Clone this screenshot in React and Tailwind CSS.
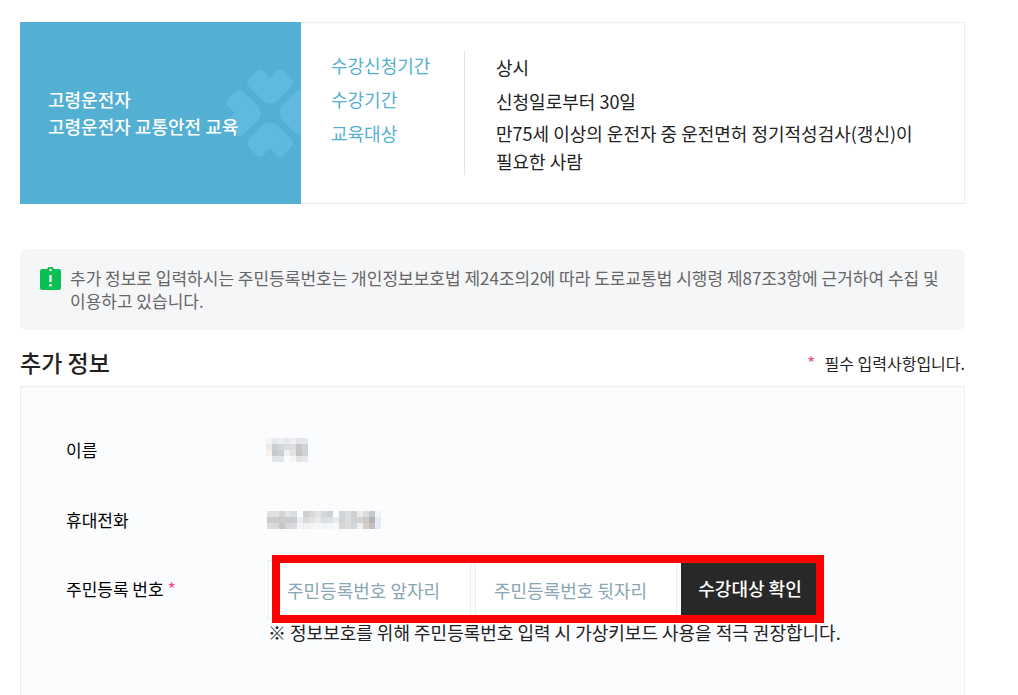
import React from 'react';

const courseInfo = [
  { label: '수강신청기간', value: '상시', line: 'leading-8' },
  { label: '수강기간', value: '신청일로부터 30일', line: 'leading-8' },
  {
    label: '교육대상',
    value: '만75세 이상의 운전자 중 운전면허 정기적성검사(갱신)이 필요한 사람',
    line: 'leading-7',
  },
];

// 개인정보 모자이크 (한 칸 6px)
const nameMosaic = [
  ['#f3f4f5', '#e6e8eb', '#edeef0', '#e6e8eb', '#eeeff1', '#e3e5e8', '#e5e8eb'],
  ['#ece9e8', '#cacdd2', '#d5d7d9', '#dbdcdd', '#dddddd', '#c5c7c9', '#cfd3d6'],
  ['#f5f1ec', '#c5c8cf', '#cccfd3', '#f0f1f3', '#e5e4e4', '#c2c4c6', '#cdd1d4'],
  [null, '#e2e5eb', '#e1e4ea', null, '#f6f4f2', '#e2e4e8', '#e6e8ec'],
];

const phoneMosaic = [
  ['#dfe1e3', '#dfe1e2', '#d3d5d7', '#e2e3e4', '#d8dcdf', null, '#cfcfd1', '#d7d8da', '#e2e3e5', '#d5d8db', '#cdced1', null, '#d4d4d5', '#dcdfe1', '#cfcfd0', '#e9ebed', '#d9dde0', '#c9c8c9', '#f0f4fa'],
  ['#cbccce', '#cacbcd', '#c9cacc', '#cacbcd', '#cbccce', '#ebecef', '#d9dadd', '#e4e1de', '#e9eaec', '#dcdfe1', '#dfe1e3', '#e9eaed', '#d3d2d2', '#d9dfe2', '#d1d2d3', '#d0d1d3', '#ccc9c9', '#b7b2b2', '#e4ebf5'],
  ['#dadbdd', '#d8d9db', '#c6c6c7', '#d5d6d8', '#d9dadc', '#f4f5f7', '#f0f1f3', '#f2f3f5', '#f5f6f8', '#f3f4f6', '#f4f5f7', '#f7f8fa', '#d9d7d5', '#dadcde', '#d4d5d7', '#efeff1', '#d5cfcc', '#c3bfc0', '#e4ebf5'],
];

const Mosaic = ({ cells, label }) => (
  <svg
    role="img"
    aria-label={label}
    width={cells[0].length * 6}
    height={cells.length * 6}
    shapeRendering="crispEdges"
  >
    {cells.map((row, y) =>
      row.map((color, x) =>
        color ? <rect key={`${x}-${y}`} x={x * 6} y={y * 6} width="6" height="6" fill={color} /> : null
      )
    )}
  </svg>
);

const petal =
  'M0 -35 L6 -41.5 Q10 -45 14 -42 L21 -34.500 Q24.500 -31 21.500 -27 L7 -12 Q0 -7 -7 -12 L-21.500 -27 Q-24.500 -31 -21 -34.500 L-14 -42 Q-10 -45 -6 -41.500 Z';

const Clover = () => (
  <svg className="absolute right-0 top-[46px]" width="75" height="90" viewBox="-44 -45 75 90" aria-hidden="true">
    <g fill="#60b9de">
      <path d={petal} />
      <path d={petal} transform="rotate(90)" />
      <path d={petal} transform="rotate(180)" />
      <path d={petal} transform="rotate(270)" />
    </g>
  </svg>
);

const NoticeIcon = () => (
  <svg className="mt-1.5 shrink-0" width="21" height="23" viewBox="0 0 21 23" aria-hidden="true">
    <path
      fill="#0abf53"
      fillRule="evenodd"
      d="M2 2 H7.300 A3.300 3.300 0 0 1 13.700 2 H19 Q21 2 21 4 V21 Q21 23 19 23 H2 Q0 23 0 21 V4 Q0 2 2 2 Z M10.500 1.800 A1.200 1.200 0 1 0 10.500 4.200 A1.200 1.200 0 1 0 10.500 1.800 Z M9.300 8 V15 H11.700 V8 Z M9.300 17 V19.400 H11.700 V17 Z"
    />
  </svg>
);

const CourseCard = () => (
  <section className="flex min-h-[182px]">
    <div className="relative flex w-[281px] shrink-0 items-center bg-[#54b0d3] pl-7">
      <Clover />
      <h2 className="relative text-lg font-medium leading-[27px] text-white">
        고령운전자
        <br />
        고령운전자 교통안전 교육
      </h2>
    </div>
    <dl className="grid flex-1 grid-cols-[133px_1fr] grid-rows-[34px_34px_auto] border border-l-0 border-[#e8eef2] py-7 pl-[30px] pr-8 text-lg">
      {courseInfo.map(item => (
        <React.Fragment key={item.label}>
          <dt className="leading-7 text-[#54b0d3]">{item.label}</dt>
          <dd className={`border-l border-[#dfe3e6] pl-[31px] text-[#222222] ${item.line}`}>{item.value}</dd>
        </React.Fragment>
      ))}
    </dl>
  </section>
);

const App = () => {
  return (
    <main className="flex min-h-screen flex-col break-keep bg-white pl-5 pr-[53px] pt-[22px] font-['Noto_Sans_CJK_KR','Noto_Sans',sans-serif]">
      <CourseCard />

      <div className="mt-[45px] flex gap-[9px] rounded-md bg-[#f5f6f8] pb-[18px] pl-5 pr-4 pt-3">
        <NoticeIcon />
        <p className="pt-[5px] text-[17px] leading-[23px] text-[#666666]">
          추가 정보로 입력하시는 주민등록번호는 개인정보보호법 제24조의2에 따라 도로교통법 시행령 제87조3항에 근거하여 수집 및 이용하고 있습니다.
        </p>
      </div>

      <div className="flex h-14 items-center justify-between pt-2">
        <h3 className="text-[23px] font-medium leading-8 text-[#222222]">추가 정보</h3>
        <p className="text-base leading-6 text-[#222222]">
          <span className="mr-[9px] text-lg leading-6 text-[#f54b8d]">*</span>
          필수 입력사항입니다.
        </p>
      </div>

      <form
        className="grow border border-b-0 border-[#e8eef2] bg-[#fbfcfe] pb-10 pl-[45px] pr-10 pt-7 text-[17px] text-black"
        onSubmit={e => e.preventDefault()}
      >
        <div className="flex h-[70px] items-center">
          <span className="w-[200px]">이름</span>
          <Mosaic cells={nameMosaic} label="이름" />
        </div>
        <div className="flex h-[70px] items-center">
          <span className="w-[201px]">휴대전화</span>
          <Mosaic cells={phoneMosaic} label="휴대전화" />
        </div>
        <div className="flex items-start pt-[5px]">
          <label htmlFor="rrn-front" className="w-[202px] shrink-0 leading-[57px]">
            주민등록 번호 <span className="text-lg leading-6 text-[#f54b8d]">*</span>
          </label>
          <div>
            <div className="relative flex w-fit gap-1">
              <input
                id="rrn-front"
                type="text"
                placeholder="주민등록번호 앞자리"
                className="h-[59px] w-[203px] border border-[#e8eef2] bg-white px-[18px] text-lg placeholder:text-[#8aa5b3]"
              />
              <input
                type="password"
                aria-label="주민등록번호 뒷자리"
                placeholder="주민등록번호 뒷자리"
                className="h-[59px] w-[202px] border border-[#e8eef2] bg-white px-[18px] text-lg placeholder:text-[#8aa5b3]"
              />
              <button type="button" className="h-[59px] w-[138px] bg-[#282828] pb-1 text-lg font-medium text-white">
                수강대상 확인
              </button>
              {/* 입력 영역 강조 */}
              <div className="pointer-events-none absolute -bottom-1 -right-[5px] -top-[5px] left-1 border-8 border-[#ff0000]" />
            </div>
            <p className="text-lg leading-[27px] text-[#222222]">
              ※ 정보보호를 위해 주민등록번호 입력 시 가상키보드 사용을 적극 권장합니다.
            </p>
          </div>
        </div>
      </form>
    </main>
  );
};

export default App;
